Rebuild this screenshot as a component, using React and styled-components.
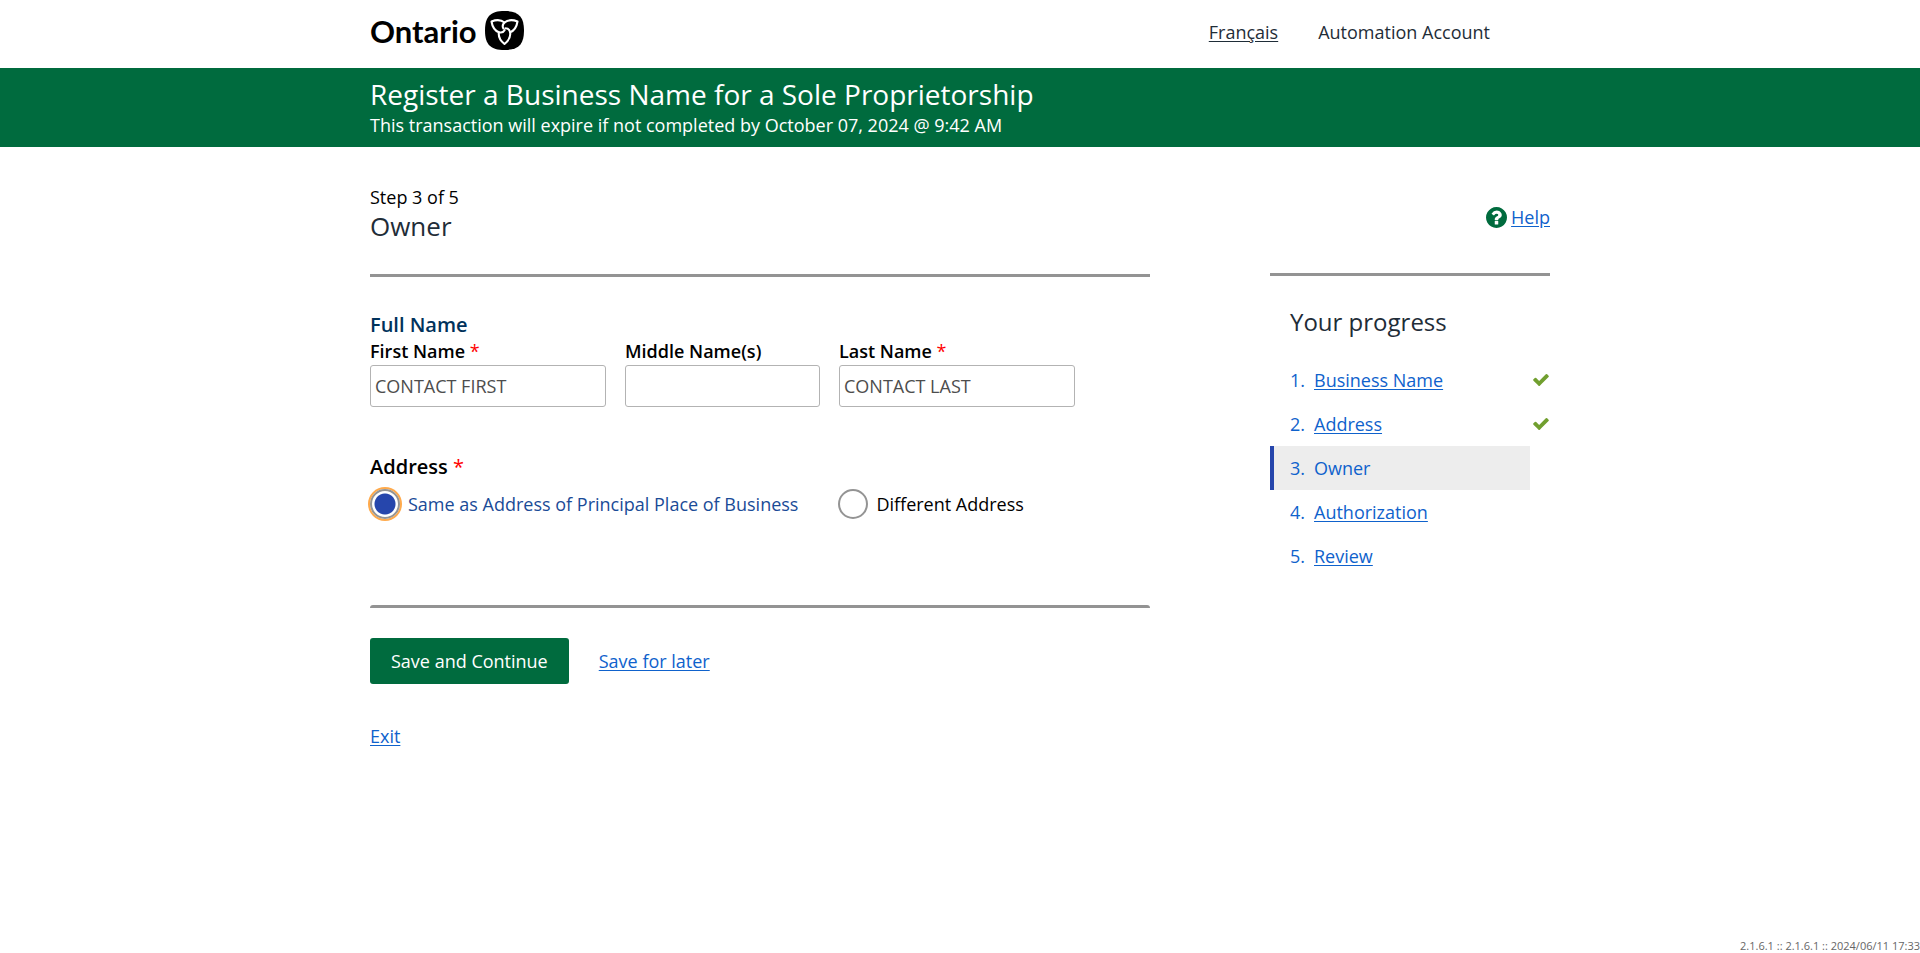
import React from 'react';
import styled, { createGlobalStyle } from 'styled-components';

const GlobalStyle = createGlobalStyle`
  *, *::before, *::after { box-sizing: border-box; }
  body {
    margin: 0;
    background: #fff;
    color: #000;
    font-family: 'Open Sans', 'Noto Sans', sans-serif;
    font-size: 18px;
    line-height: 24px;
  }
`;

const Page = styled.div`
  display: flex;
  flex-direction: column;
  min-height: 100vh;
`;

const Container = styled.div`
  width: 100%;
  max-width: 1180px;
  margin: 0 auto;
`;

const Header = styled.header`
  padding: 8px 0 13px;
`;

const HeaderRow = styled(Container)`
  display: flex;
  justify-content: space-between;
  align-items: flex-start;
`;

const Logo = styled.a`
  display: flex;
  align-items: flex-start;
  gap: 8px;
  color: #000;
  font-family: Lato, sans-serif;
  font-size: 31px;
  font-weight: 700;
  line-height: 47px;
  text-decoration: none;

  svg { margin-top: 3px; }
`;

const HeaderNav = styled.nav`
  display: flex;
  gap: 40px;
  padding: 12px 60px 0 0;
  color: #1f2d38;
`;

const LanguageLink = styled.a`
  color: inherit;
  text-underline-offset: 2px;
`;

const Banner = styled.div`
  padding: 8px 0 9px;
  background: #006b3e;
  color: #fff;
`;

const BannerTitle = styled.h1`
  margin: 0;
  font-size: 28px;
  font-weight: 400;
  line-height: 36px;
`;

const BannerNote = styled.p`
  margin: 0;
  font-weight: 500;
  line-height: 26px;
`;

const Columns = styled(Container)`
  display: flex;
  align-items: flex-start;
  gap: 120px;
  padding-top: 38px;
`;

const Main = styled.main`
  flex: 1;
  min-width: 0;
`;

const StepLabel = styled.p`
  margin: 0;
`;

const StepTitle = styled.h2`
  margin: 0 0 31px;
  color: #1f2d38;
  font-size: 26px;
  font-weight: 400;
  line-height: 34px;
`;

const Rule = styled.hr`
  height: 3px;
  margin: 0;
  border: 0;
  border-radius: ${(p) => (p.$rounded ? '3px 3px 0 0' : '0')};
  background: #939393;
`;

const Group = styled.fieldset`
  min-width: 0;
  margin: ${(p) => p.$top}px 0 0;
  padding: 0;
  border: 0;
`;

const GroupTitle = styled.legend`
  padding: 0;
  color: ${(p) => p.$color || '#000'};
  font-size: 20px;
  font-weight: 600;
  line-height: 28px;
`;

const Required = styled.span`
  color: #f00;
  font-weight: 400;
`;

const FieldRow = styled.div`
  display: flex;
  gap: 19px;
`;

const Field = styled.div`
  display: flex;
  flex-direction: column;
  gap: 1px;
  width: ${(p) => p.$width}px;
`;

const FieldLabel = styled.label`
  font-weight: 600;
  line-height: 25px;
`;

const TextInput = styled.input`
  width: 100%;
  height: 42px;
  padding: 0 4px;
  border: 1px solid #b3b3b3;
  border-radius: 3px;
  background: #fff;
  color: #4d4d4d;
  font: inherit;
`;

const RadioRow = styled.div`
  display: flex;
  gap: 40px;
  padding-top: 8px;
`;

const RadioLabel = styled.label`
  display: flex;
  align-items: center;
  gap: 8px;
  color: #000;

  &:has(input:checked) { color: #1a4b97; }
`;

const Radio = styled.input`
  appearance: none;
  width: 30px;
  height: 30px;
  margin: 0;
  border: 2px solid #949494;
  border-radius: 50%;
  background: #fff;

  &:checked {
    background: radial-gradient(circle, #2646ac 0 10px, #fff 11px);
    box-shadow: 0 0 0 2px #ffaa4c;
  }
`;

const Actions = styled.div`
  display: flex;
  align-items: center;
  gap: 30px;
  margin: 30px 0 40px;
`;

const PrimaryButton = styled.button`
  height: 46px;
  padding: 0 21px;
  border: 0;
  border-radius: 3px;
  background: #006b3e;
  color: #fff;
  font: inherit;
  font-weight: 500;
`;

const TextLink = styled.a`
  color: #0f62cc;
  text-underline-offset: 2px;
`;

const Aside = styled.aside`
  width: 280px;
  padding-top: 20px;
`;

const HelpRow = styled.div`
  display: flex;
  justify-content: flex-end;
  align-items: center;
  gap: 4px;
  margin-bottom: 44px;
`;

const HelpIcon = styled.svg`
  width: 21px;
  height: 21px;
  fill: #006b3e;
`;

const ProgressTitle = styled.h2`
  margin: 30px 0 20px;
  padding-left: 20px;
  color: #1f2d38;
  font-size: 24px;
  font-weight: 400;
  line-height: 32px;
`;

const StepList = styled.ol`
  margin: 0;
  padding: 0;
  list-style: none;
`;

const StepItem = styled.li`
  display: flex;
  align-items: center;
  height: 44px;
  margin-right: ${(p) => (p.$current ? 20 : 0)}px;
  padding-left: 16px;
  border-left: 4px solid ${(p) => (p.$current ? '#2646ac' : 'transparent')};
  background: ${(p) => (p.$current ? '#ededed' : 'transparent')};
  color: #0f62cc;
`;

const StepNumber = styled.span`
  width: 24px;
`;

const DoneIcon = styled.svg`
  width: 16px;
  height: 12px;
  margin-left: auto;
  margin-right: 1px;
  fill: #719f2f;
`;

const Footer = styled.footer`
  margin-top: auto;
  color: #666;
  font-size: 11px;
  line-height: 14px;
  text-align: right;
`;

const steps = [
  { name: 'Business Name', done: true },
  { name: 'Address', done: true },
  { name: 'Owner', current: true },
  { name: 'Authorization' },
  { name: 'Review' },
];

const petal =
  'M14.400 21.200C13.700 25.500 16 29.800 20 33C24 29.800 26.300 25.500 25.600 21.200C25 18.800 23.200 17.300 21 17.300';

function Trillium() {
  return (
    <svg width="39" height="39" viewBox="0 0 39 39" aria-hidden="true">
      <path
        d="M19.500 0C33.500 0 39 5.500 39 19.500S33.500 39 19.500 39 0 33.500 0 19.500 5.500 0 19.500 0Z"
        fill="#000"
      />
      <g
        transform="translate(-0.500 0)"
        fill="none"
        stroke="#fff"
        strokeWidth="2.100"
        strokeLinejoin="round"
        strokeLinecap="round"
      >
        <path d={petal} />
        <path d={petal} transform="rotate(120 20 18)" />
        <path d={petal} transform="rotate(240 20 18)" />
      </g>
    </svg>
  );
}

function QuestionCircle() {
  return (
    <HelpIcon viewBox="128 128 1536 1536" aria-hidden="true">
      <path d="M1024 1376v-192q0-14-9-23t-23-9h-192q-14 0-23 9t-9 23v192q0 14 9 23t23 9h192q14 0 23-9t9-23zm256-672q0-88-55.500-163t-138.500-116-170-41q-243 0-371 213-15 24 8 42l132 100q7 6 19 6 16 0 25-12 53-68 86-92 34-24 86-24 48 0 85.500 26t37.500 59q0 38-20 61t-68 45q-63 28-115.500 86.500t-52.500 125.500v36q0 14 9 23t23 9h192q14 0 23-9t9-23q0-19 21.500-49.500t54.500-49.500q32-18 49-28.500t46-35 44.500-48 28-60.500 12.500-81zm384 192q0 209-103 385.500t-279.500 279.500-385.500 103-385.500-103-279.500-279.500-103-385.500 103-385.500 279.500-279.500 385.500-103 385.500 103 279.500 279.500 103 385.500z" />
    </HelpIcon>
  );
}

function Check() {
  return (
    <DoneIcon viewBox="121 334 1550 1188" role="img" aria-label="Completed">
      <path d="M1671 566q0 40-28 68l-724 724-136 136q-28 28-68 28t-68-28l-136-136-362-362q-28-28-28-68t28-68l136-136q28-28 68-28t68 28l294 295 656-657q28-28 68-28t68 28l136 136q28 28 28 68z" />
    </DoneIcon>
  );
}

function NameField({ id, label, width, required, value }) {
  return (
    <Field $width={width}>
      <FieldLabel htmlFor={id}>
        {label}
        {required && <Required> *</Required>}
      </FieldLabel>
      <TextInput id={id} type="text" defaultValue={value} required={required} />
    </Field>
  );
}

export default function App() {
  return (
    <Page>
      <GlobalStyle />
      <Header>
        <HeaderRow>
          <Logo href="#">
            Ontario
            <Trillium />
          </Logo>
          <HeaderNav>
            <LanguageLink href="#" lang="fr">Français</LanguageLink>
            <span>Automation Account</span>
          </HeaderNav>
        </HeaderRow>
      </Header>
      <Banner>
        <Container>
          <BannerTitle>Register a Business Name for a Sole Proprietorship</BannerTitle>
          <BannerNote>
            This transaction will expire if not completed by October 07, 2024 @ 9:42 AM
          </BannerNote>
        </Container>
      </Banner>
      <Columns>
        <Main>
          <StepLabel>Step 3 of 5</StepLabel>
          <StepTitle>Owner</StepTitle>
          <Rule />
          <Group $top={34}>
            <GroupTitle $color="#00325b">Full Name</GroupTitle>
            <FieldRow>
              <NameField id="first" label="First Name" width={236} required value="CONTACT FIRST" />
              <NameField id="middle" label="Middle Name(s)" width={195} value="" />
              <NameField id="last" label="Last Name" width={236} required value="CONTACT LAST" />
            </FieldRow>
          </Group>
          <Group $top={46}>
            <GroupTitle>
              Address<Required> *</Required>
            </GroupTitle>
            <RadioRow>
              <RadioLabel>
                <Radio type="radio" name="address" defaultChecked />
                Same as Address of Principal Place of Business
              </RadioLabel>
              <RadioLabel>
                <Radio type="radio" name="address" />
                Different Address
              </RadioLabel>
            </RadioRow>
          </Group>
          <Group as="div" $top={86}>
            <Rule $rounded />
          </Group>
          <Actions>
            <PrimaryButton type="button">Save and Continue</PrimaryButton>
            <TextLink href="#">Save for later</TextLink>
          </Actions>
          <TextLink href="#">Exit</TextLink>
        </Main>
        <Aside>
          <HelpRow>
            <QuestionCircle />
            <TextLink href="#">Help</TextLink>
          </HelpRow>
          <Rule />
          <ProgressTitle>Your progress</ProgressTitle>
          <StepList>
            {steps.map((step, i) => (
              <StepItem key={step.name} $current={step.current}>
                <StepNumber>{i + 1}.</StepNumber>
                {step.current ? (
                  <span aria-current="step">{step.name}</span>
                ) : (
                  <TextLink href="#">{step.name}</TextLink>
                )}
                {step.done && <Check />}
              </StepItem>
            ))}
          </StepList>
        </Aside>
      </Columns>
      <Footer>2.1.6.1 :: 2.1.6.1 :: 2024/06/11 17:33</Footer>
    </Page>
  );
}
